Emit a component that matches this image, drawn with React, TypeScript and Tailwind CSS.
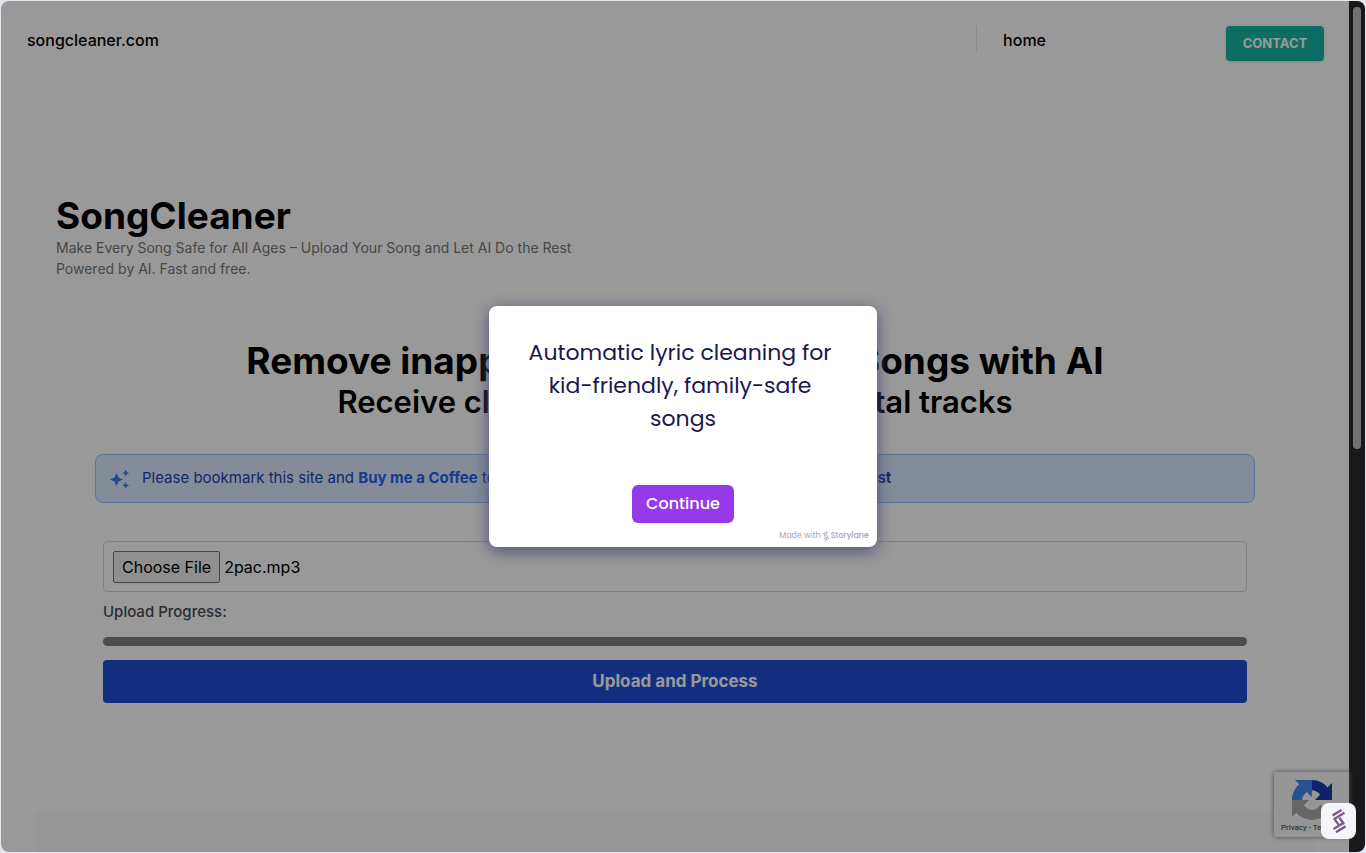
import { FormEvent, useEffect, useRef } from "react";

function StorylaneMark({ className }: { className?: string }) {
  return (
    <svg viewBox="0 0 14 24" className={className} fill="none" stroke="currentColor" strokeWidth="2.4" strokeLinecap="butt" aria-hidden="true">
      <path d="M0.6 6.4 9.6 1M2.2 10 12.4 3.8" />
      <path d="M2 9.4 6.6 15.6M7.4 8.8 12 15" />
      <path d="M1.4 20 11.4 14M4 23.2 13.6 17.4" />
    </svg>
  );
}

function Sparkles() {
  return (
    <svg viewBox="0 0 20 20" className="size-5 shrink-0 text-[#3b7de8]" fill="currentColor" aria-hidden="true">
      <path d="M6.5 4 8.6 8.4 13 10.5 8.6 12.6 6.5 17 4.4 12.6 0 10.5 4.4 8.4Z" />
      <path d="M15.7.8 16.8 3.1 19.1 4.2 16.8 5.3 15.7 7.6 14.6 5.3 12.3 4.2 14.6 3.1Z" />
      <path d="M15.7 13 16.8 15.3 19.1 16.4 16.8 17.5 15.7 19.8 14.6 17.5 12.3 16.4 14.6 15.3Z" />
    </svg>
  );
}

function RecaptchaBadge() {
  return (
    <div className="absolute right-0 bottom-[15px] h-[65px] w-[75px] overflow-hidden rounded-l-xs bg-[#f9f9f9] shadow-[0_0_5px_gray]">
      <svg viewBox="0 0 64 64" className="mt-2 ml-[18px] size-10" aria-hidden="true">
        <path fill="#1c3aa9" d="M64 31.955l-.033-1.37V4.687l-7.16 7.16C50.948 4.674 42.033.093 32.05.093c-10.4 0-19.622 4.96-25.458 12.64l11.736 11.86a15.55 15.55 0 0 1 4.754-5.334c2.05-1.6 4.952-2.906 8.968-2.906.485 0 .86.057 1.135.163 4.976.393 9.288 3.14 11.828 7.124l-8.307 8.307L64 31.953" />
        <path fill="#4285f4" d="M31.862.094l-1.37.033H4.594l7.16 7.16C4.58 13.147 0 22.06 0 32.046c0 10.4 4.96 19.622 12.64 25.458L24.5 45.768a15.55 15.55 0 0 1-5.334-4.754c-1.6-2.05-2.906-4.952-2.906-8.968 0-.485.057-.86.163-1.135.393-4.976 3.14-9.288 7.124-11.828l8.307 8.307L31.86.095" />
        <path fill="#ababab" d="M.001 32.045l.033 1.37v25.898l7.16-7.16c5.86 7.173 14.774 11.754 24.76 11.754 10.4 0 19.622-4.96 25.458-12.64l-11.736-11.86a15.55 15.55 0 0 1-4.754 5.334c-2.05 1.6-4.952 2.906-8.968 2.906-.485 0-.86-.057-1.135-.163-4.976-.393-9.288-3.14-11.828-7.124l8.307-8.307c-10.522.04-22.4.066-27.295-.005" />
      </svg>
      <p className="ml-[7px] font-['Roboto',sans-serif] text-[8px] leading-4 whitespace-nowrap text-[#333]">Privacy - Terms</p>
    </div>
  );
}

function UploadForm() {
  const fileRef = useRef<HTMLInputElement>(null);

  // preload the demo track so the picker shows its name
  useEffect(() => {
    if (!fileRef.current) return;
    const transfer = new DataTransfer();
    transfer.items.add(new File([""], "2pac.mp3", { type: "audio/mpeg" }));
    fileRef.current.files = transfer.files;
  }, []);

  function handleSubmit(event: FormEvent<HTMLFormElement>) {
    event.preventDefault();
  }

  return (
    <form onSubmit={handleSubmit} className="mt-[38px] flex flex-col px-2">
      <input
        ref={fileRef}
        type="file"
        aria-label="Song file"
        className="w-full rounded border border-gray-300 px-[9px] pt-[9px] pb-2 text-base text-black file:h-8 file:rounded-xs file:border file:border-solid file:border-[#767676] file:bg-[#efefef] file:px-2 file:text-black"
      />
      <label htmlFor="progress" className="mt-2 text-[15px] leading-6 font-medium text-[#4b4b55]">
        Upload Progress:
      </label>
      <progress
        id="progress"
        value={0}
        max={100}
        className="mt-[13px] h-[9px] w-full appearance-none overflow-hidden rounded-full bg-[#808080] [&::-webkit-progress-bar]:bg-[#808080]"
      />
      <button type="submit" className="mt-[14px] h-[43px] rounded bg-[#1d4ed8] pt-px text-[17px] font-bold text-white">
        Upload and Process
      </button>
    </form>
  );
}

function IntroDialog() {
  return (
    <div className="absolute inset-0 flex items-center justify-center bg-black/40">
      <div role="dialog" aria-label="Introduction" className="flex h-[241px] w-[388px] flex-col items-center rounded-lg bg-white px-7 pt-[30px] pb-[3px] font-['Poppins','Inter',sans-serif] shadow-[0_4px_16px_#4f4f7c]">
        <p className="text-center text-[22px] leading-[33px] text-[#1b1750]">
          Automatic lyric cleaning for&nbsp;
          <br />
          kid-friendly, family-safe&nbsp;
          <br />
          songs
        </p>
        <button className="mt-[50px] h-[38px] w-[102px] shrink-0 rounded-md bg-[#9639e9] text-base font-medium text-white">Continue</button>
        <a href="#storylane" className="mt-auto -mr-5 flex items-center gap-0.5 self-end text-[8px] leading-4 text-[#a4a3b8]">
          Made with <StorylaneMark className="h-2.5 w-1.5" />
          <span className="font-medium">Storylane</span>
        </a>
      </div>
    </div>
  );
}

export default function App() {
  return (
    <div className="flex h-screen bg-[#e4e5ee] p-px font-['Inter',sans-serif]">
      <div className="relative flex flex-1 overflow-hidden rounded-lg bg-white">
        <div className="relative flex min-w-0 flex-1 flex-col">
          <header className="flex items-start justify-between pt-[25px] pr-[25px] pl-[26px] text-base font-medium text-black">
            <a href="#top" className="leading-7">songcleaner.com</a>
            <nav className="flex gap-[180px]">
              <a href="#home" className="h-[26px] border-l border-gray-200 pl-[26px] leading-7">home</a>
              <button className="h-[35px] w-[98px] rounded bg-[#14b8a6] text-[13px] font-bold text-white uppercase shadow">Contact</button>
            </nav>
          </header>

          <section className="mt-[134px] px-[55px]">
            <h1 className="text-[37px] leading-[42px] font-bold text-black">SongCleaner</h1>
            <p className="text-[14px] leading-[21px] text-[#777]">
              Make Every Song Safe for All Ages – Upload Your Song and Let AI Do the Rest
              <br />
              Powered by AI. Fast and free.
            </p>
          </section>

          <section className="mt-[61px] text-center text-black">
            <h2 className="text-[37px] leading-[42px] font-bold">Remove inappropriate lyrics from Songs with AI</h2>
            <h3 className="text-[31px] leading-10 font-semibold">Receive clean vocals and instrumental tracks</h3>
          </section>

          <main className="mx-auto mt-8 w-full max-w-[1160px]">
            <div className="flex h-[49px] items-center gap-3 rounded-lg border border-[#93c5fd] bg-[#dbeafe] px-[14px] text-[15px] text-[#1e40af]">
              <Sparkles />
              <p>
                Please bookmark this site and <a href="#coffee" className="font-bold text-[#2563eb]">Buy me a Coffee</a> to help me keep it free and cover our monthly <strong>server cost</strong>
              </p>
            </div>
            <UploadForm />
          </main>

          <div className="mx-[34px] mt-auto h-[41px] bg-[#fafafa]" />
          <RecaptchaBadge />
        </div>

        <div className="w-4 shrink-0 bg-[#2b2b2b] px-1 pt-1.5">
          <div className="h-[442px] rounded-full bg-[#bdbdbd]" />
        </div>

        <IntroDialog />
        <button aria-label="Open Storylane" className="absolute right-[9px] bottom-[13px] grid h-9 w-[35px] place-items-center rounded-lg bg-[#f4f5f9] text-[#7e5a86]">
          <StorylaneMark className="h-6 w-3.5" />
        </button>
      </div>
    </div>
  );
}
